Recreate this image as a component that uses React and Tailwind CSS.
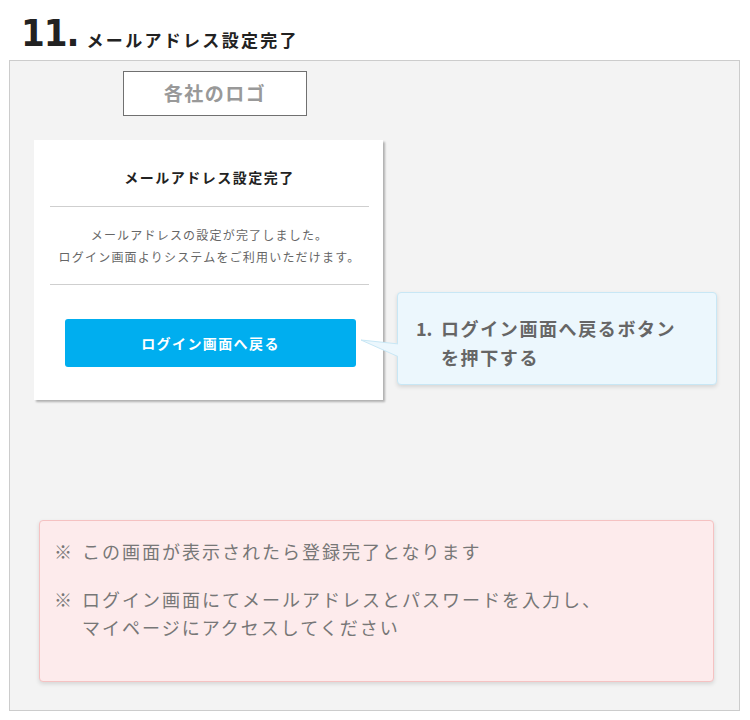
const jp = { fontFamily: '"Noto Sans CJK JP", "Noto Sans", sans-serif' };

const Note = ({ lines }) => (
  <div className="flex">
    <span className="w-[28px] shrink-0 tracking-normal">※</span>
    <div>
      {lines.map((l) => (
        <p key={l}>{l}</p>
      ))}
    </div>
  </div>
);

const App = () => {
  return (
    <div className="w-[750px] h-[720px] bg-white overflow-hidden" style={jp}>
      {/* Heading */}
      <div className="flex items-end h-[60px] pl-[21px] pb-[8px]">
        <span
          className="text-[38px] font-bold leading-none text-[#222] tracking-[-1px]"
          style={{ fontFamily: '"DejaVu Sans Condensed", "DejaVu Sans", sans-serif' }}
        >
          11.
        </span>
        <span className="ml-[8px] text-[17px] font-bold tracking-[2.3px] leading-[24px] text-[#222]">
          メールアドレス設定完了
        </span>
      </div>

      {/* Panel */}
      <div className="ml-[9px] w-[731px] h-[651px] border border-[#cccccc] bg-[#f3f3f3]">
        <div className="ml-[113px] mt-[10px] w-[184px] h-[45px] border border-[#707070] bg-white flex items-center justify-center">
          <span className="text-[19px] font-bold text-[#999] tracking-[1.5px]">各社のロゴ</span>
        </div>

        <div className="flex mt-[24px] ml-[24px]">
          {/* Card */}
          <div className="w-[349px] h-[260px] bg-white shadow-[2px_2px_2px_rgba(0,0,0,0.28)] pl-[16px] pr-[14px] flex flex-col">
            <p className="pt-[26px] text-center text-[14px] font-bold tracking-[1.5px] leading-[22px] text-[#222]">
              メールアドレス設定完了
            </p>
            <div className="mt-[18px] border-t border-[#cfcfcf]" />
            <div className="pt-[17px] pb-[16px] text-center text-[12px] leading-[22px] tracking-[1.2px] text-[#666]">
              <p>メールアドレスの設定が完了しました。</p>
              <p>ログイン画面よりシステムをご利用いただけます。</p>
            </div>
            <div className="border-t border-[#cfcfcf]" />
            <div className="ml-[15px] mr-[13px] mt-[34px]">
              <div className="h-[48px] rounded-[3px] bg-[#00aeef] flex items-center justify-center text-white text-[14px] font-bold tracking-[1.4px]">
                ログイン画面へ戻る
              </div>
            </div>
          </div>

          {/* Callout */}
          <div className="relative ml-[14px] mt-[152px] w-[320px] h-[93px] rounded-[4px] border border-[#c8e7f5] bg-[#ecf7fd] shadow-[0_2px_4px_rgba(0,0,0,0.12)] pl-[18px] pt-[21px]">
            <svg className="absolute left-[-38px] top-[45px]" width="40" height="20" viewBox="0 0 40 20">
              <polygon points="1,2 39,6 39,19" fill="#ecf7fd" stroke="#c8e7f5" strokeWidth="1" />
              <rect x="38" y="0" width="2" height="20" fill="#ecf7fd" />
            </svg>
            <div className="flex text-[18px] font-bold leading-[29px] text-[#666] tracking-[1.6px]">
              <span className="w-[25px] shrink-0 tracking-normal">1.</span>
              <div>
                <p>ログイン画面へ戻るボタン</p>
                <p>を押下する</p>
              </div>
            </div>
          </div>
        </div>

        {/* Notes */}
        <div className="ml-[29px] mt-[120px] w-[675px] h-[162px] rounded-[4px] border border-[#f5c2c2] bg-[#fdebec] shadow-[0_2px_4px_rgba(0,0,0,0.12)] pl-[14px] pt-[16px] text-[18px] leading-[28px] tracking-[2px] text-[#777]">
          <Note lines={['この画面が表示されたら登録完了となります']} />
          <div className="mt-[20px]">
            <Note lines={['ログイン画面にてメールアドレスとパスワードを入力し、', 'マイページにアクセスしてください']} />
          </div>
        </div>
      </div>
    </div>
  );
};

export default App;
